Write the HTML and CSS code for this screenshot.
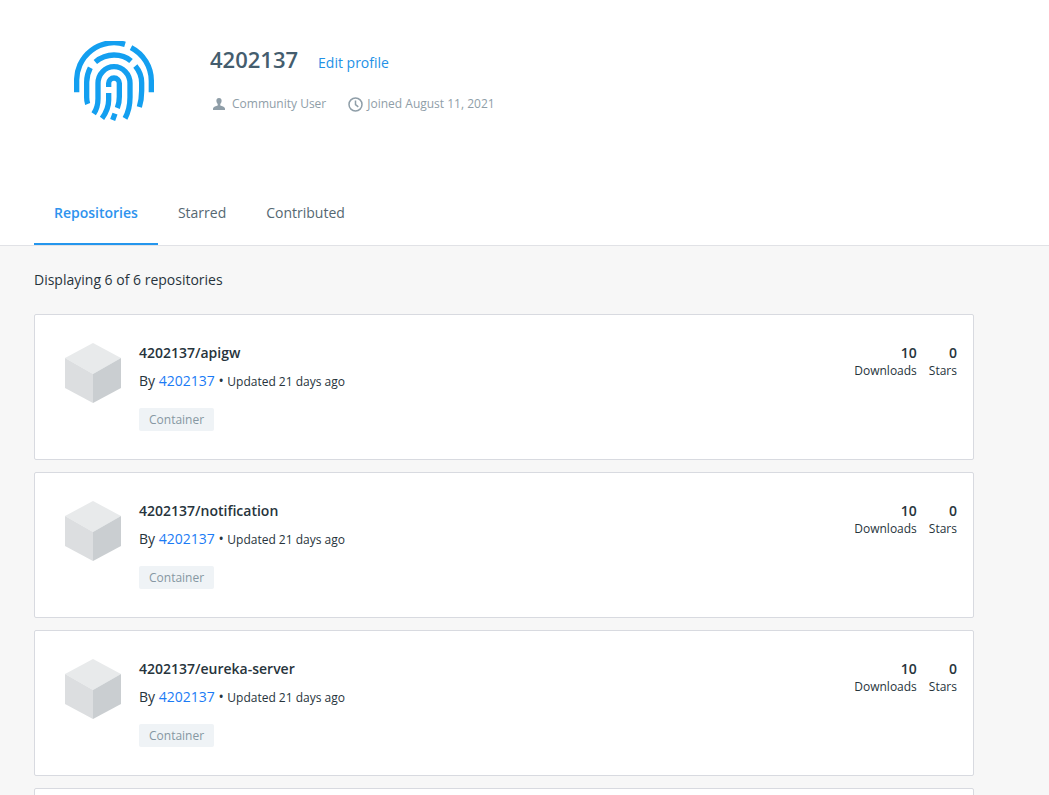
FILE: index.html
```html
<!DOCTYPE html>
<html lang="en">
<head>
<meta charset="utf-8">
<title>4202137 - Profile</title>
<link rel="stylesheet" href="styles.css">
</head>
<body>
<svg class="defs" aria-hidden="true">
  <symbol id="cube" viewBox="0 0 56 60">
    <path d="M28 0 56 15 28 31 0 15Z" fill="#e8eaeb"/>
    <path d="M0 15 28 31V60L0 45Z" fill="#dcdee0"/>
    <path d="M56 15 28 31V60L56 45Z" fill="#caced1"/>
  </symbol>
</svg>
<header class="profile">
  <svg class="avatar" viewBox="30 27 240 240" fill="none" stroke="#139ff0" stroke-width="16" aria-hidden="true">
    <path d="M38 181V147A112 112 0 0 1 183 37M201 47A112 112 0 0 1 262 147V181"/>
    <path d="M94 90Q119 69 150 69T201 87"/>
    <path d="M79 107Q68 128 68 150V196Q68 208 71 216"/>
    <path d="M214 102Q233 125 233 152V176Q233 202 226 225"/>
    <path d="M89 245Q102 226 102 200V154A48 50 0 0 1 198 154V196Q198 232 183 259"/>
    <path d="M134 165V154A16 16 0 0 1 166 154V194Q166 214 160 228"/>
    <path d="M134 183V204Q134 232 114 259M153 245 146 264"/>
  </svg>
  <div class="identity">
    <div class="name-row">
      <h1 class="name">4202137</h1>
      <a class="edit" href="#">Edit profile</a>
    </div>
    <div class="facts">
      <span class="fact">
        <svg class="icon-user" viewBox="0 0 12 12" aria-hidden="true"><path d="M6 0C3.900 0 3.200 1.500 3.400 3.300 3.500 4.500 4 5.400 4.700 6V7.600C3 8.400 0.500 8.700 0 10.400V12H12V10.400C11.500 8.700 9 8.400 7.300 7.600V6C8 5.400 8.500 4.500 8.600 3.300 8.800 1.500 8.100 0 6 0Z" fill="#8f9ea8"/></svg>
        Community User
      </span>
      <span class="fact joined">
        <svg class="icon-clock" viewBox="0 0 15 15" fill="none" stroke="#8f9ea8" stroke-width="1.500" aria-hidden="true"><circle cx="7.500" cy="7.500" r="6.500"/><path d="M7.500 3.500V7.700L10.300 9.800"/></svg>
        Joined August 11, 2021
      </span>
    </div>
  </div>
</header>
<nav class="tabs">
  <a class="tab active" href="#" aria-current="page">Repositories</a>
  <a class="tab" href="#">Starred</a>
  <a class="tab" href="#">Contributed</a>
</nav>
<main class="content">
  <p class="count">Displaying 6 of 6 repositories</p>
  <div class="list">
    <article class="card">
      <svg class="cube" aria-hidden="true"><use href="#cube"/></svg>
      <div class="details">
        <h2 class="title">4202137/apigw</h2>
        <p class="byline">By <a class="owner" href="#">4202137</a> • <span class="updated">Updated 21 days ago</span></p>
        <span class="tag">Container</span>
      </div>
      <div class="stats">
        <div class="stat"><strong class="value">10</strong><span>Downloads</span></div>
        <div class="stat"><strong class="value">0</strong><span>Stars</span></div>
      </div>
    </article>
    <article class="card">
      <svg class="cube" aria-hidden="true"><use href="#cube"/></svg>
      <div class="details">
        <h2 class="title">4202137/notification</h2>
        <p class="byline">By <a class="owner" href="#">4202137</a> • <span class="updated">Updated 21 days ago</span></p>
        <span class="tag">Container</span>
      </div>
      <div class="stats">
        <div class="stat"><strong class="value">10</strong><span>Downloads</span></div>
        <div class="stat"><strong class="value">0</strong><span>Stars</span></div>
      </div>
    </article>
    <article class="card">
      <svg class="cube" aria-hidden="true"><use href="#cube"/></svg>
      <div class="details">
        <h2 class="title">4202137/eureka-server</h2>
        <p class="byline">By <a class="owner" href="#">4202137</a> • <span class="updated">Updated 21 days ago</span></p>
        <span class="tag">Container</span>
      </div>
      <div class="stats">
        <div class="stat"><strong class="value">10</strong><span>Downloads</span></div>
        <div class="stat"><strong class="value">0</strong><span>Stars</span></div>
      </div>
    </article>
    <article class="card"></article>
  </div>
</main>
</body>
</html>
```

FILE: styles.css
```css
* { box-sizing: border-box; }
body {
  margin: 0;
  height: 100vh;
  overflow: hidden;
  background: #f7f7f7;
  color: #27343c;
  font: 14px/20px "Open Sans", "Noto Sans", sans-serif;
}
h1, h2, p { margin: 0; }
a { text-decoration: none; }
.defs { position: absolute; width: 0; height: 0; }

.profile {
  display: flex;
  gap: 56px;
  padding: 41px 74px 59px;
  background: #fff;
}
.avatar { flex: none; width: 80px; height: 80px; }
.name-row { display: flex; align-items: baseline; gap: 20px; }
.name { font-size: 22px; line-height: 36px; font-weight: 600; color: #445d6e; }
.edit { color: #2391e6; }
.facts {
  display: flex;
  gap: 22px;
  margin-top: 17px;
  padding-left: 3px;
  font-size: 12px;
  color: #8f9ea8;
}
.fact { display: flex; align-items: center; gap: 7px; }
.joined { gap: 4px; }
.icon-user { width: 12px; height: 12px; }
.icon-clock { width: 15px; height: 15px; }

.tabs {
  display: flex;
  padding: 0 34px;
  background: #fff;
  border-bottom: 1px solid #e1e2e6;
}
.tab {
  padding: 23px 20px 20px;
  border-bottom: 2px solid transparent;
  color: #556872;
}
.active { border-color: #2496ed; color: #2e93ee; font-weight: 600; }

.content { padding: 24px 75px 24px 34px; }
.list { display: grid; gap: 12px; margin-top: 24px; }
.card {
  display: flex;
  min-height: 146px;
  padding: 28px 16px 27px 30px;
  background: #fff;
  border: 1px solid #d8dae0;
  border-radius: 2px;
}
.cube { flex: none; width: 56px; height: 60px; margin-right: 18px; }
.details { flex: 1; }
.title { font-size: 14px; line-height: 20px; font-weight: 600; }
.byline { margin: 8px 0 16px; }
.owner { color: #1b7bf5; }
.updated { font-size: 12px; }
.tag {
  display: inline-block;
  padding: 0 10px;
  border-radius: 2px;
  background: #eff3f6;
  color: #8697a2;
  font-size: 12px;
  line-height: 23px;
}
.stats { display: flex; gap: 12px; font-size: 12px; line-height: 16px; }
.stat { display: flex; flex-direction: column; align-items: flex-end; }
.value { font-size: 14px; line-height: 20px; font-weight: 600; }
```
